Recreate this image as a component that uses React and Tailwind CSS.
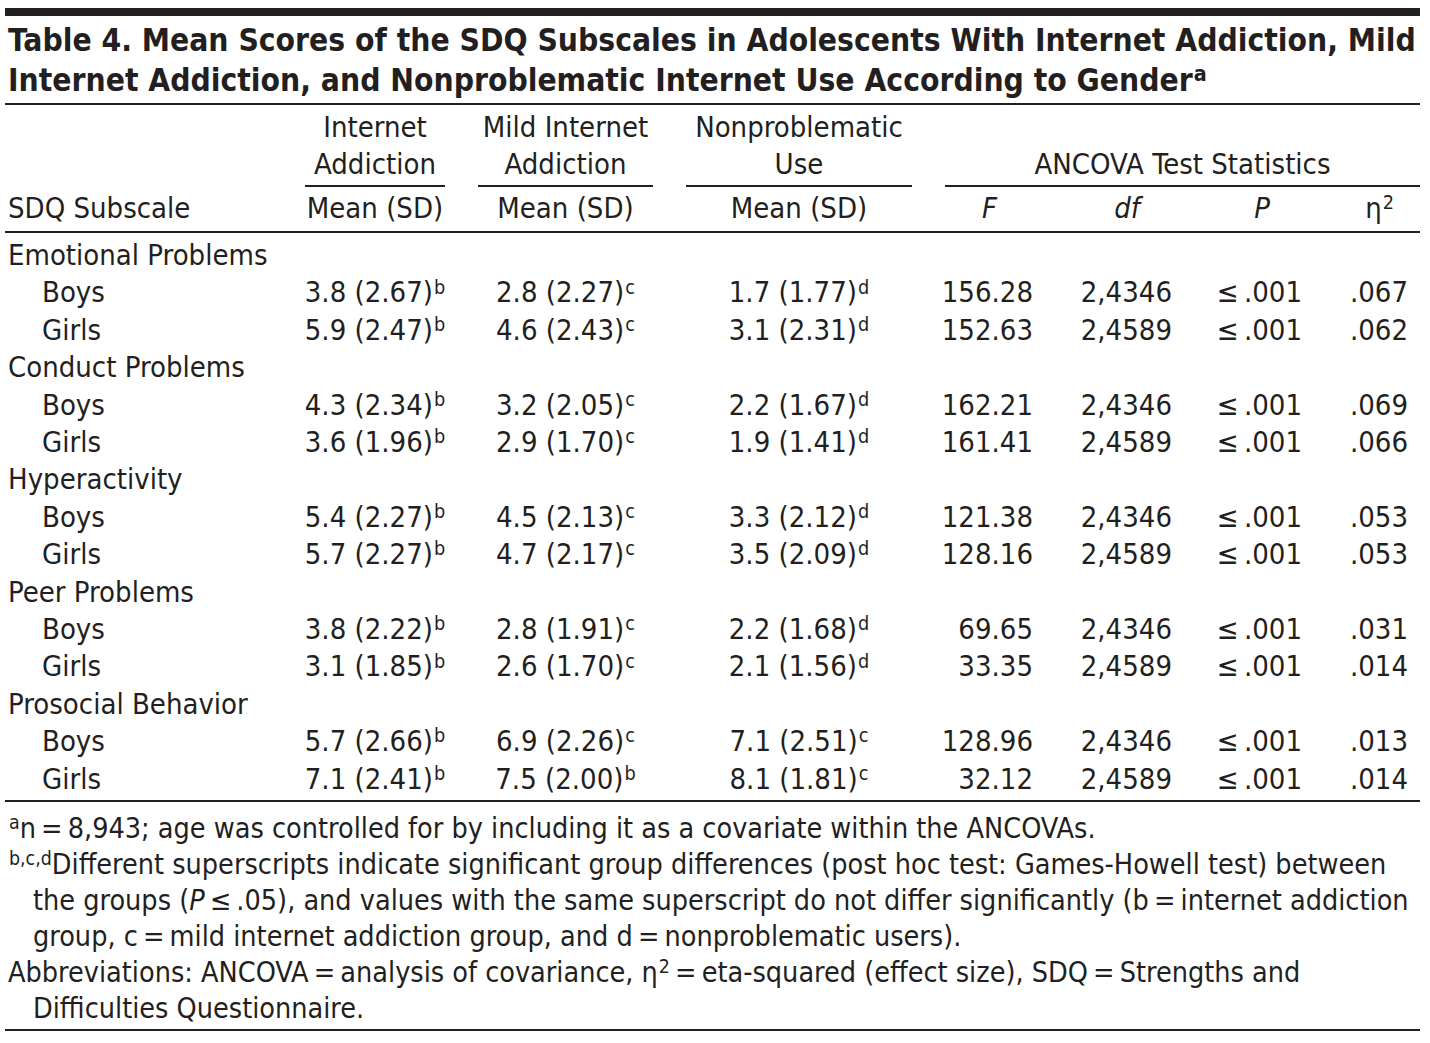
const cols = 'grid grid-cols-[300px_140px_33px_175px_33px_226px_33px_110px_145px_130px_90px]';

const rows = [
  { group: 'Emotional Problems' },
  { label: 'Boys', m: [['3.8 (2.67)', 'b'], ['2.8 (2.27)', 'c'], ['1.7 (1.77)', 'd']], f: '156.28', df: '2,4346', eta: '.067' },
  { label: 'Girls', m: [['5.9 (2.47)', 'b'], ['4.6 (2.43)', 'c'], ['3.1 (2.31)', 'd']], f: '152.63', df: '2,4589', eta: '.062' },
  { group: 'Conduct Problems' },
  { label: 'Boys', m: [['4.3 (2.34)', 'b'], ['3.2 (2.05)', 'c'], ['2.2 (1.67)', 'd']], f: '162.21', df: '2,4346', eta: '.069' },
  { label: 'Girls', m: [['3.6 (1.96)', 'b'], ['2.9 (1.70)', 'c'], ['1.9 (1.41)', 'd']], f: '161.41', df: '2,4589', eta: '.066' },
  { group: 'Hyperactivity' },
  { label: 'Boys', m: [['5.4 (2.27)', 'b'], ['4.5 (2.13)', 'c'], ['3.3 (2.12)', 'd']], f: '121.38', df: '2,4346', eta: '.053' },
  { label: 'Girls', m: [['5.7 (2.27)', 'b'], ['4.7 (2.17)', 'c'], ['3.5 (2.09)', 'd']], f: '128.16', df: '2,4589', eta: '.053' },
  { group: 'Peer Problems' },
  { label: 'Boys', m: [['3.8 (2.22)', 'b'], ['2.8 (1.91)', 'c'], ['2.2 (1.68)', 'd']], f: '69.65', df: '2,4346', eta: '.031' },
  { label: 'Girls', m: [['3.1 (1.85)', 'b'], ['2.6 (1.70)', 'c'], ['2.1 (1.56)', 'd']], f: '33.35', df: '2,4589', eta: '.014' },
  { group: 'Prosocial Behavior' },
  { label: 'Boys', m: [['5.7 (2.66)', 'b'], ['6.9 (2.26)', 'c'], ['7.1 (2.51)', 'c']], f: '128.96', df: '2,4346', eta: '.013' },
  { label: 'Girls', m: [['7.1 (2.41)', 'b'], ['7.5 (2.00)', 'b'], ['8.1 (1.81)', 'c']], f: '32.12', df: '2,4589', eta: '.014' },
];

const thin = '\u2009';

function Sup({ children }) {
  return <span className="relative -top-[0.45em] text-[0.68em] leading-none ml-[1px]">{children}</span>;
}

function Rule({ className = '' }) {
  return <div className={`h-[2px] bg-[#231f20] ${className}`} />;
}

function Mean({ v }) {
  return (
    <div className="flex justify-center">
      <span>
        {v[0]}
        <Sup>{v[1]}</Sup>
      </span>
    </div>
  );
}

export default function App() {
  return (
    <div className="w-[1430px] h-[1043px] bg-white text-[#231f20] font-['DejaVu_Sans_Condensed','DejaVu_Sans',sans-serif] whitespace-nowrap">
      <div className="ml-[5px] w-[1415px] pt-[8px]">
        <div className="h-[8px] bg-[#231f20]" />
        <h1 className="pl-[3px] pt-[4px] text-[31.5px] font-bold leading-[40px]">
          Table 4. Mean Scores of the SDQ Subscales in Adolescents With Internet Addiction, Mild
          <br />
          Internet Addiction, and Nonproblematic Internet Use According to Gender<Sup>a</Sup>
        </h1>
        <Rule className="mt-[3px]" />

        {/* column heads */}
        <div className={`${cols} text-[29px] leading-[37px]`}>
          <div className="row-start-1 col-start-2 pt-[4px] pb-[2px] border-b-2 border-[#231f20] text-center">
            Internet<br />Addiction
          </div>
          <div className="row-start-1 col-start-4 pt-[4px] pb-[2px] border-b-2 border-[#231f20] text-center">
            Mild Internet<br />Addiction
          </div>
          <div className="row-start-1 col-start-6 pt-[4px] pb-[2px] border-b-2 border-[#231f20] text-center">
            Nonproblematic<br />Use
          </div>
          <div className="row-start-1 col-start-8 col-span-4 pt-[41px] pb-[2px] border-b-2 border-[#231f20] text-center">
            ANCOVA Test Statistics
          </div>

          <div className="row-start-2 col-start-1 pl-[3px] pt-[3px] pb-[4px]">SDQ Subscale</div>
          <div className="row-start-2 col-start-2 pt-[3px] text-center">Mean (SD)</div>
          <div className="row-start-2 col-start-4 pt-[3px] text-center">Mean (SD)</div>
          <div className="row-start-2 col-start-6 pt-[3px] text-center">Mean (SD)</div>
          <div className="row-start-2 col-start-8 pt-[3px] pr-[58px] text-right italic">F</div>
          <div className="row-start-2 col-start-9 pt-[3px] pr-[60px] text-right italic">df</div>
          <div className="row-start-2 col-start-10 pt-[3px] pr-[60px] text-right italic">P</div>
          <div className="row-start-2 col-start-11 pt-[3px] pr-[26px] text-right">
            η<Sup>2</Sup>
          </div>
        </div>
        <Rule />

        {/* body */}
        <div className="pt-[4px] pb-[2px] text-[29px] leading-[37.4px]">
          {rows.map((r, i) =>
            r.group ? (
              <div key={i} className="pl-[3px]">{r.group}</div>
            ) : (
              <div key={i} className={cols}>
                <div className="pl-[37px]">{r.label}</div>
                <Mean v={r.m[0]} />
                <div />
                <Mean v={r.m[1]} />
                <div />
                <Mean v={r.m[2]} />
                <div />
                <div className="flex justify-end pr-[22px]">{r.f}</div>
                <div className="flex justify-end pr-[28px]">{r.df}</div>
                <div className="flex justify-end pr-[28px]">≤{thin}.001</div>
                <div className="flex justify-end pr-[12px]">{r.eta}</div>
              </div>
            )
          )}
        </div>
        <Rule />

        {/* footnotes */}
        <div className="pt-[9px] pb-[2px] text-[28.5px] leading-[36px]">
          <div className="pl-[3px]">
            <Sup>a</Sup>n{thin}={thin}8,943; age was controlled for by including it as a covariate within the ANCOVAs.
          </div>
          <div className="pl-[3px]">
            <Sup>b,c,d</Sup>Different superscripts indicate significant group differences (post hoc test: Games-Howell test) between
          </div>
          <div className="pl-[28px]">
            the groups (<i>P</i>{thin}≤{thin}.05), and values with the same superscript do not differ significantly (b{thin}={thin}internet addiction
          </div>
          <div className="pl-[28px]">
            group, c{thin}={thin}mild internet addiction group, and d{thin}={thin}nonproblematic users).
          </div>
          <div className="pl-[3px]">
            Abbreviations: ANCOVA{thin}={thin}analysis of covariance, η<Sup>2</Sup>{thin}={thin}eta-squared (effect size), SDQ{thin}={thin}Strengths and
          </div>
          <div className="pl-[28px]">Difficulties Questionnaire.</div>
        </div>
        <Rule />
      </div>
    </div>
  );
}
